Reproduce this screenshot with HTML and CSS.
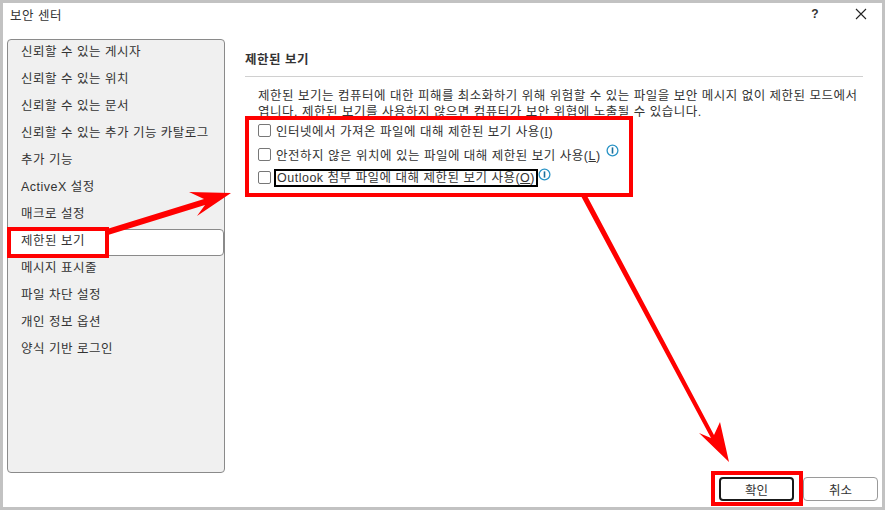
FILE: index.html
```html
<!DOCTYPE html>
<html lang="ko">
<head>
    <meta charset="UTF-8">
    <meta name="viewport" content="width=device-width, initial-scale=1.0">
    <title>보안 센터</title>
    <link rel="stylesheet" href="styles.css">
</head>
<body>
    <div class="dialog">
        <div class="title-bar">
            <span class="title">보안 센터</span>
            <span class="help">?</span>
            <svg class="close" width="12" height="12" viewBox="0 0 12 12">
                <path d="M1 1L11 11M11 1L1 11" stroke="#222" stroke-width="1.1" fill="none"/>
            </svg>
        </div>

        <div class="content">
            <ul class="side-menu">
                <li>신뢰할 수 있는 게시자</li>
                <li>신뢰할 수 있는 위치</li>
                <li>신뢰할 수 있는 문서</li>
                <li>신뢰할 수 있는 추가 기능 카탈로그</li>
                <li>추가 기능</li>
                <li>ActiveX 설정</li>
                <li>매크로 설정</li>
                <li class="active">제한된 보기</li>
                <li>메시지 표시줄</li>
                <li>파일 차단 설정</li>
                <li>개인 정보 옵션</li>
                <li>양식 기반 로그인</li>
            </ul>

            <div class="main">
                <h2 class="section-title">제한된 보기</h2>
                <p class="description">제한된 보기는 컴퓨터에 대한 피해를 최소화하기 위해 위험할 수 있는 파일을 보안 메시지 없이 제한된 모드에서<br>엽니다. 제한된 보기를 사용하지 않으면 컴퓨터가 보안 위협에 노출될 수 있습니다.</p>
                <div class="options">
                    <div class="option">
                        <span class="checkbox"></span>
                        <span class="label">인터넷에서 가져온 파일에 대해 제한된 보기 사용(<u>I</u>)</span>
                    </div>
                    <div class="option">
                        <span class="checkbox"></span>
                        <span class="label">안전하지 않은 위치에 있는 파일에 대해 제한된 보기 사용(<u>L</u>)</span>
                        <svg class="info" width="13" height="13" viewBox="0 0 13 13">
                            <circle cx="6.5" cy="6.5" r="5.4" fill="#fff" stroke="#2a94c6" stroke-width="1.3"/>
                            <path d="M6.5 3.4V9.6" stroke="#1a6f9c" stroke-width="1.6"/>
                        </svg>
                    </div>
                    <div class="option">
                        <span class="checkbox"></span>
                        <span class="label focused">Outlook 첨부 파일에 대해 제한된 보기 사용(<u>O</u>)</span>
                        <svg class="info info-tight" width="13" height="13" viewBox="0 0 13 13">
                            <circle cx="6.5" cy="6.5" r="5.4" fill="#fff" stroke="#2a94c6" stroke-width="1.3"/>
                            <path d="M6.5 3.4V9.6" stroke="#1a6f9c" stroke-width="1.6"/>
                        </svg>
                    </div>
                </div>
            </div>
        </div>

        <div class="footer">
            <button class="btn btn-primary">확인</button>
            <button class="btn">취소</button>
        </div>
    </div>

    <!-- red annotations drawn over the dialog -->
    <svg class="annotations" width="885" height="510" viewBox="0 0 885 510">
        <rect x="247" y="118" width="384" height="77" fill="none" stroke="#f00" stroke-width="4"/>
        <rect x="9" y="229" width="98" height="27" fill="none" stroke="#f00" stroke-width="4"/>
        <rect x="713" y="473" width="88" height="31" fill="none" stroke="#f00" stroke-width="4"/>
        <polygon points="107,229 204,199 189,192 231,193 197,216 205,205 108,235" fill="#f00"/>
        <polygon points="581,196 586,194 714,435 720,422 729,462 699,433 711,438" fill="#f00"/>
    </svg>
</body>
</html>
```

FILE: styles.css
```css
* {
    box-sizing: border-box;
}
html, body {
    height: 100%;
}
body {
    margin: 0;
    background-color: #c2c2c2;
    font-family: "Liberation Sans", "Noto Sans CJK KR", sans-serif;
    font-size: 12.5px;
    letter-spacing: 0.5px;
    color: #333;
    overflow: hidden;
}
.dialog {
    position: absolute;
    left: 3px;
    top: 3px;
    right: 3px;
    bottom: 3px;
    background-color: white;
    display: flex;
    flex-direction: column;
}
.title-bar {
    height: 36px;
    display: flex;
    align-items: center;
    padding: 0 15px 14px 7px;
    flex-shrink: 0;
}
.title {
    flex: 1;
}
.help {
    font-size: 12px;
    font-weight: bold;
    margin-right: 36px;
}
.content {
    flex: 1;
    display: flex;
    min-height: 0;
}
.side-menu {
    width: 218px;
    margin: 0 0 0 4px;
    padding: 0;
    list-style: none;
    background-color: #f0f0f0;
    border: 1px solid #8a8a8a;
    border-radius: 4px;
    flex-shrink: 0;
}
.side-menu li {
    height: 27px;
    line-height: 25px;
    padding-left: 13px;
    white-space: nowrap;
}
.side-menu li.active {
    background-color: white;
    border: 1px solid #8a8a8a;
    border-radius: 4px;
    padding-left: 12px;
    line-height: 23px;
}
.main {
    flex: 1;
    padding: 0 19px 0 20px;
}
.section-title {
    margin: 0;
    font-size: 12.5px;
    font-weight: bold;
    height: 38px;
    padding: 12px 0 7px;
    line-height: 18px;
    border-bottom: 1px solid #d0d0d0;
}
.description {
    margin: 11px 0 0 13px;
    line-height: 16px;
    white-space: nowrap;
}
.options {
    margin: -1px 0 0 13px;
}
.option {
    height: 23.5px;
    display: flex;
    align-items: center;
    gap: 5px;
}
.checkbox {
    width: 13px;
    height: 13px;
    border: 1px solid #777;
    border-radius: 2px;
    background-color: white;
    flex-shrink: 0;
}
.label {
    white-space: nowrap;
}
.label.focused {
    border: 2px solid black;
    height: 18px;
    line-height: 14px;
    padding: 0 1px;
    margin-left: -2px;
}
.info {
    margin-top: -7px;
    flex-shrink: 0;
}
.info-tight {
    margin-left: -5px;
}
.footer {
    height: 34px;
    display: flex;
    justify-content: flex-end;
    align-items: flex-start;
    gap: 9px;
    padding: 4px 4px 0 0;
    flex-shrink: 0;
}
.btn {
    width: 75px;
    height: 24px;
    padding: 0;
    background-color: white;
    border: 1px solid #9a9a9a;
    border-radius: 4px;
    font-family: inherit;
    font-size: 12.5px;
    color: #333;
}
.btn-primary {
    border: 2px solid #1a1a1a;
}
.annotations {
    position: absolute;
    left: 0;
    top: 0;
    pointer-events: none;
}
```
